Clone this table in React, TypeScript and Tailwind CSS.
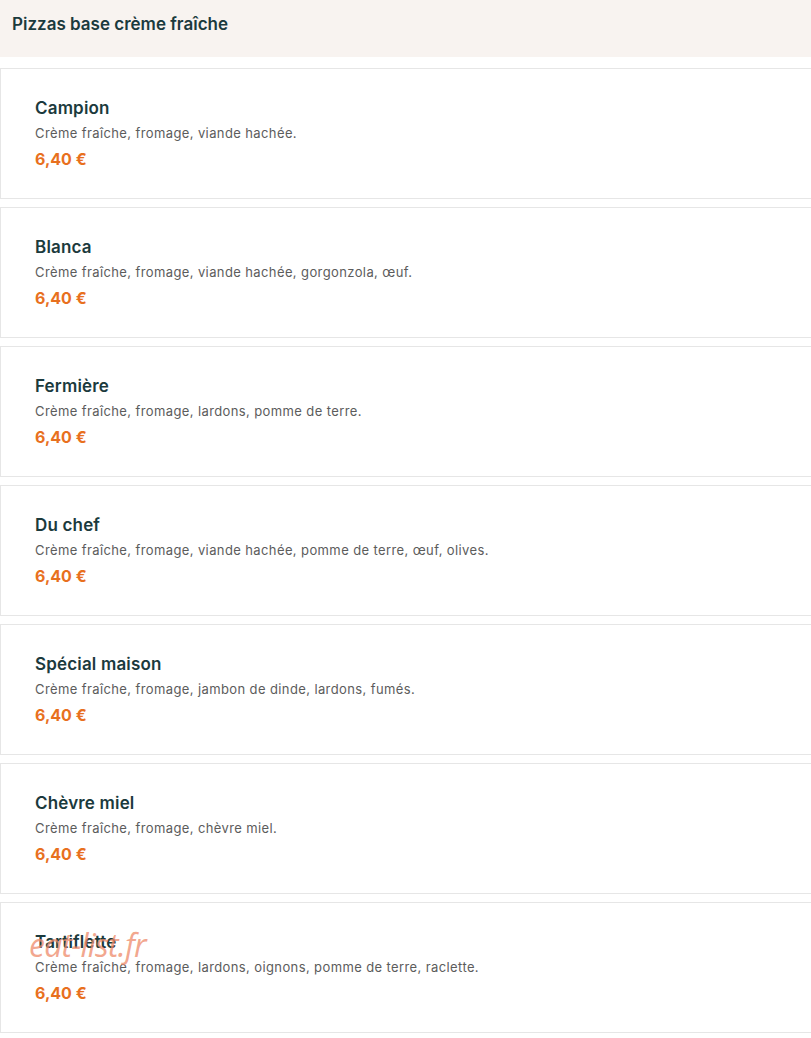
import type { FC } from 'react';

interface IPizza {
  name: string;
  description: string;
  price: string;
}

const pizzas: IPizza[] = [
  { name: 'Campion', description: 'Crème fraîche, fromage, viande hachée.', price: '6,40 €' },
  { name: 'Blanca', description: 'Crème fraîche, fromage, viande hachée, gorgonzola, œuf.', price: '6,40 €' },
  { name: 'Fermière', description: 'Crème fraîche, fromage, lardons, pomme de terre.', price: '6,40 €' },
  { name: 'Du chef', description: 'Crème fraîche, fromage, viande hachée, pomme de terre, œuf, olives.', price: '6,40 €' },
  { name: 'Spécial maison', description: 'Crème fraîche, fromage, jambon de dinde, lardons, fumés.', price: '6,40 €' },
  { name: 'Chèvre miel', description: 'Crème fraîche, fromage, chèvre miel.', price: '6,40 €' },
  { name: 'Tartiflette', description: 'Crème fraîche, fromage, lardons, oignons, pomme de terre, raclette.', price: '6,40 €' },
];

const PizzaCard: FC<{ pizza: IPizza; watermark?: boolean }> = ({ pizza, watermark }) => (
  <div className="relative h-[131px] mb-2 w-[815px] border border-[#e6e6e6] bg-white pl-[34px] pt-[27px]">
    <p className="text-[17px] leading-[24px] font-semibold text-[#1b3a3d] tracking-[0.01em]">{pizza.name}</p>
    <p className="mt-[3px] text-[13px] leading-[20px] text-[#5c5c5c] tracking-[0.03em]">{pizza.description}</p>
    <p className="mt-[5px] text-[16px] leading-[22px] font-bold text-[#e8701e]">{pizza.price}</p>
    {watermark && (
      <span className="absolute left-[28px] top-[22px] text-[32px] leading-[40px] italic text-[#ee8a6a]/75 font-['Open_Sans',sans-serif] tracking-tight">
        eat-list.fr
      </span>
    )}
  </div>
);

export default function App() {
  return (
    <div className="min-h-[1038px] bg-white overflow-hidden font-['Inter',sans-serif]">
      <div className="h-[57px] bg-[#f8f3f0] pl-3 pt-[12px]">
        <h2 className="text-[17px] leading-[24px] font-semibold text-[#1b3a3d]">Pizzas base crème fraîche</h2>
      </div>
      <div className="pt-[11px]">
        {pizzas.map((p, i) => (
          <PizzaCard key={p.name} pizza={p} watermark={i === pizzas.length - 1} />
        ))}
      </div>
    </div>
  );
}
